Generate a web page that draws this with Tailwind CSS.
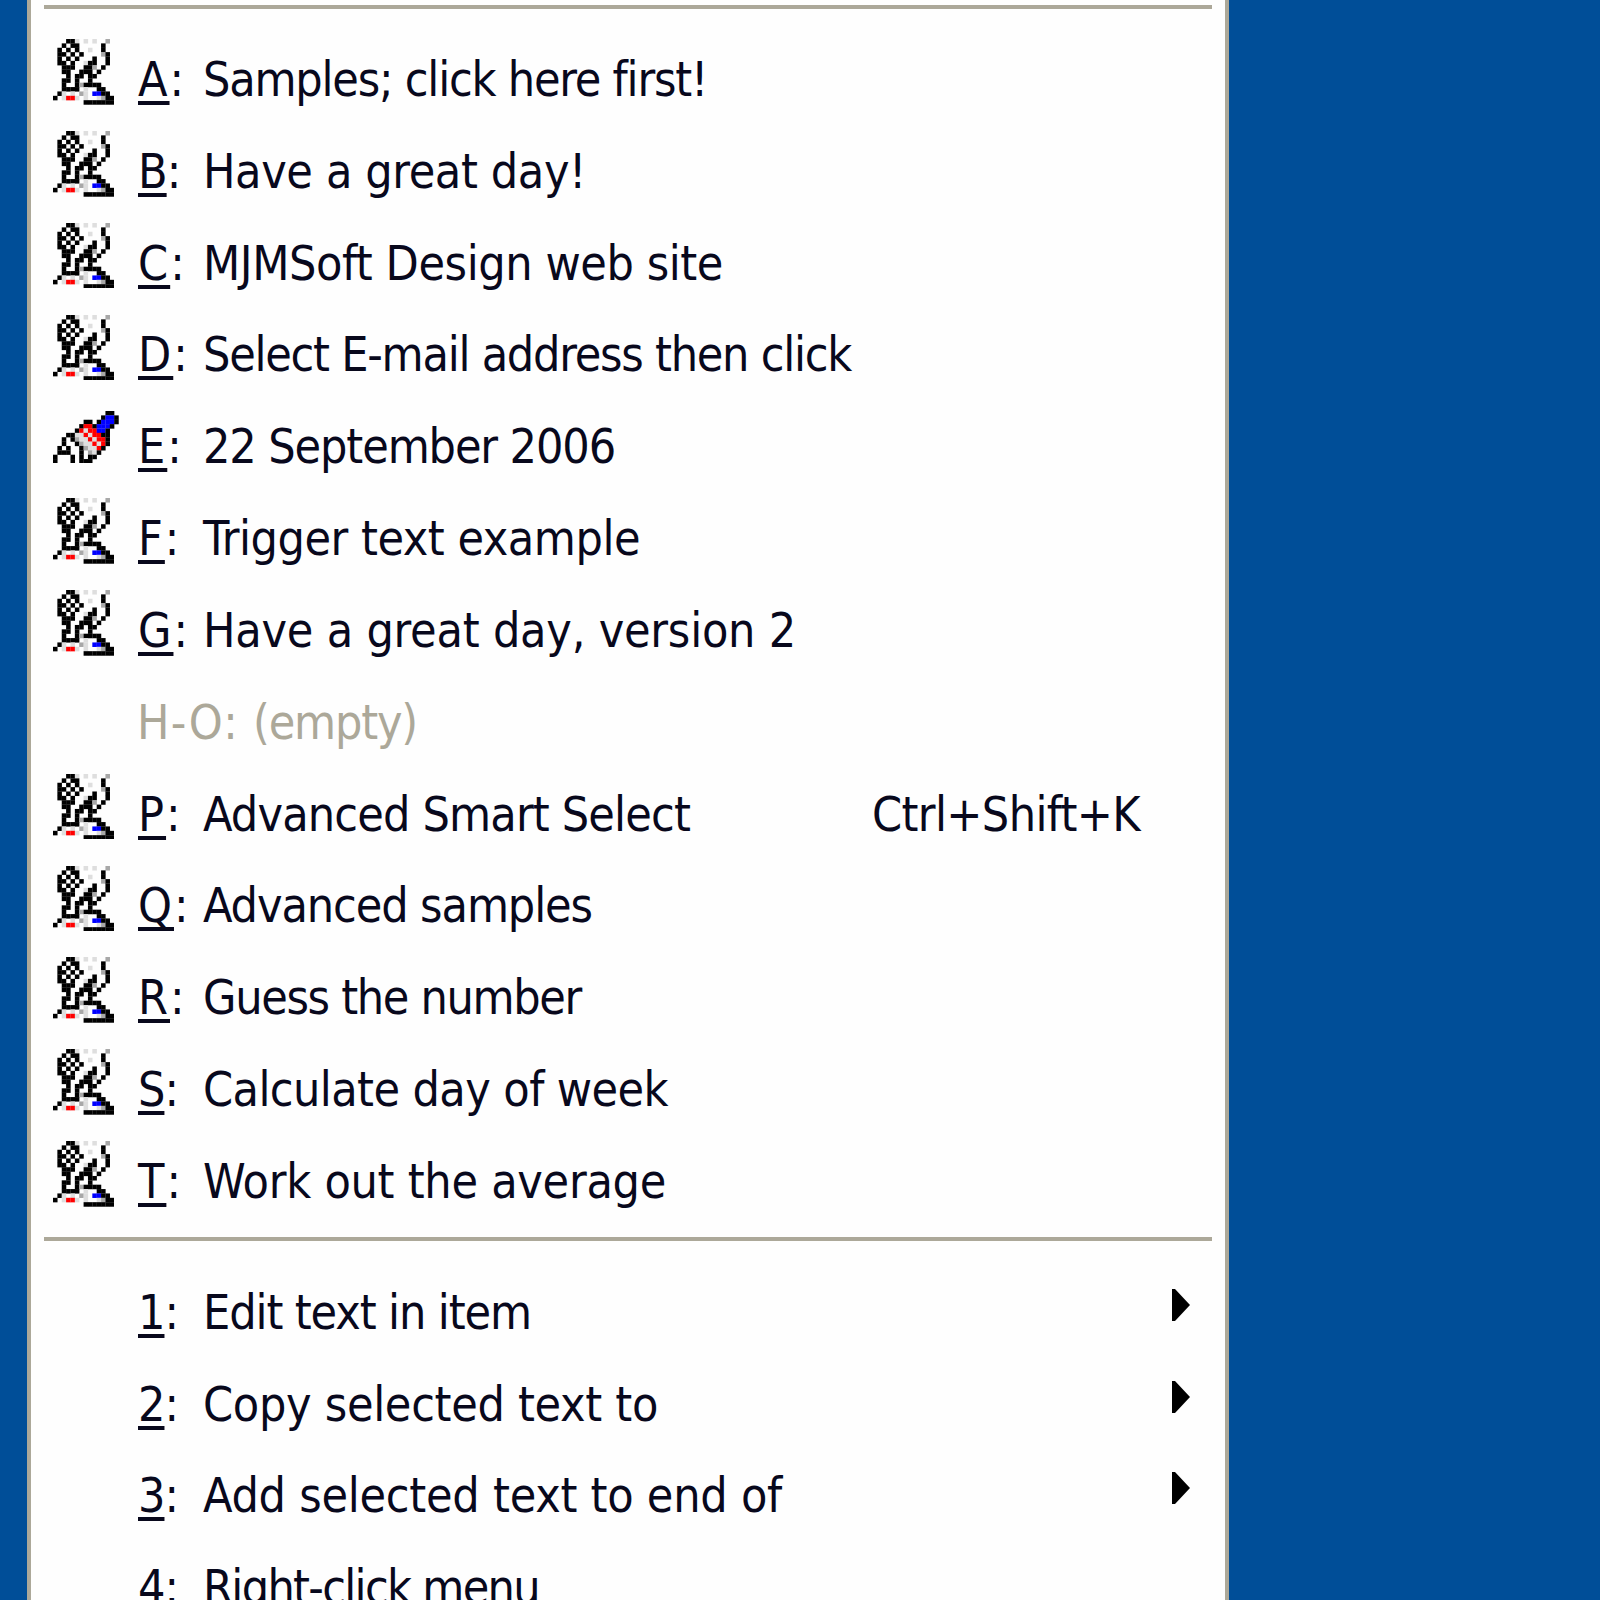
<!DOCTYPE html>
<html lang="en">
  <head>
    <meta charset="UTF-8" />
    <title>Menu</title>
    <script src="https://cdn.jsdelivr.net/npm/@tailwindcss/browser@4"></script>
  </head>
  <body class="w-[1600px] h-[1600px] overflow-hidden bg-[#004e98] font-['DejaVu_Sans_Condensed','DejaVu_Sans',sans-serif]">
    <main class="ml-[27px] w-[1202px] h-[1600px] overflow-hidden bg-[#fefefe] border-x-4 border-[#aca899] px-[13px] text-[48px] leading-none text-[#08081c] whitespace-nowrap">
      <hr class="mt-[5px] h-1 border-0 bg-[#aca899]" />
      <ul id="items" class="mt-[24px]"></ul>
      <hr class="mt-[10px] h-1 border-0 bg-[#aca899]" />
      <ul id="tools" class="mt-[25px]"></ul>
    </main>

    <script>
      // k black, g grey, l light grey, r red, b blue
      const colors = { k: "#000", g: "#a8a8a8", l: "#dedede", r: "#f00", b: "#00f" };

      const hands = [
        "...kkl.l.l..g.",
        "..k.kk.....k..",
        ".k.k.k..l..k..",
        ".kk.k.k....gk.",
        ".k.k.k...k..k.",
        ".kk.k..lkk..k.",
        "..kkk..kkg.k..",
        "..kk..kkk.k...",
        "...k.kk.kk....",
        "..kk.k..k.....",
        "..k..kgkkkk...",
        "..kkkk.l..kk..",
        ".kl.l.gl.bbkk.",
        "k.lrrl.l..lgkk",
        ".......kkkkkkk",
      ];

      const brush = [
        "............kk.",
        "...........kbbk",
        ".......kk.kbbbk",
        "......krrkbbbk.",
        ".....krlrrbbk..",
        "...kkllrlrrkk..",
        "..k.kgllrlrrk..",
        "..k..kgllrlrk..",
        ".k.k..kgllrk...",
        ".kkk..k.glk....",
        "k...k.k.kk.....",
        "k...k.kkk......",
      ];

      const items = [
        ["A", "Samples; click here first!", 504],
        ["B", "Have a great day!", 383],
        ["C", "MJMSoft Design web site", 520],
        ["D", "Select E-mail address then click", 648],
        ["E", "22 September 2006", 412],
        ["F", "Trigger text example", 437],
        ["G", "Have a great day, version 2", 593],
        null,
        ["P", "Advanced Smart Select", 487, "Ctrl+Shift+K"],
        ["Q", "Advanced samples", 389],
        ["R", "Guess the number", 378],
        ["S", "Calculate day of week", 465],
        ["T", "Work out the average", 463],
      ];

      const tools = [
        ["1", "Edit text in item", 328],
        ["2", "Copy selected text to", 455],
        ["3", "Add selected text to end of", 579],
        ["4", "Right-click menu", 336],
      ];

      const ctx = document.createElement("canvas").getContext("2d");
      ctx.font = "48px 'DejaVu Sans Condensed', 'DejaVu Sans', sans-serif";

      // text with its letters spread over the given width
      function fit(text, width, cls) {
        const extra = (width - ctx.measureText(text).width) / text.length;
        return `<span class="shrink-0 ${cls || ""}" style="letter-spacing:${extra.toFixed(3)}px">${text}</span>`;
      }

      function icon(rows) {
        let rects = "";
        rows.forEach((row, y) => {
          [...row].forEach((c, x) => {
            if (colors[c]) rects += `<rect x="${x}" y="${y}" width="1.04" height="1.04" fill="${colors[c]}"/>`;
          });
        });
        const w = rows[0].length;
        return `<svg class="block" width="${w * 4.37}" height="${rows.length * 4.37}" viewBox="0 0 ${w} ${rows.length}">${rects}</svg>`;
      }

      function row(item, isTool) {
        if (!item) {
          return `<li class="flex items-center gap-[14px] h-[91.84px] pl-[93px] text-[#aca899]">${fit("H-O:", 102)}${fit("(empty)", 164)}</li>`;
        }
        const [key, label, width, shortcut] = item;
        const isBrush = key === "E";
        let tracking = "tracking-[2px]";
        if ("BS1234".includes(key)) tracking = "tracking-[-1px]";
        return `
          <li class="flex items-center h-[91.84px]">
            <span class="w-[94px] shrink-0 pl-[9px] ${isBrush ? "pb-[18px]" : "pb-[14px]"}">${isTool ? "" : icon(isBrush ? brush : hands)}</span>
            <span class="w-[65px] shrink-0"><span class="${tracking} underline decoration-4 underline-offset-[5px] [text-decoration-skip-ink:none]">${key}</span>:</span>
            ${fit(label, width)}
            ${shortcut ? fit(shortcut, 268, "ml-auto mr-[72px]") : ""}
            ${isTool && key !== "4" ? `<svg class="ml-auto mr-[22px] mb-[14px] shrink-0" width="19" height="32" viewBox="0 0 19 32"><path d="M1 0h3l15 16L4 32H1z"/></svg>` : ""}
          </li>`;
      }

      document.getElementById("items").innerHTML = items.map((i) => row(i, false)).join("");
      document.getElementById("tools").innerHTML = tools.map((i) => row(i, true)).join("");
    </script>
  </body>
</html>
